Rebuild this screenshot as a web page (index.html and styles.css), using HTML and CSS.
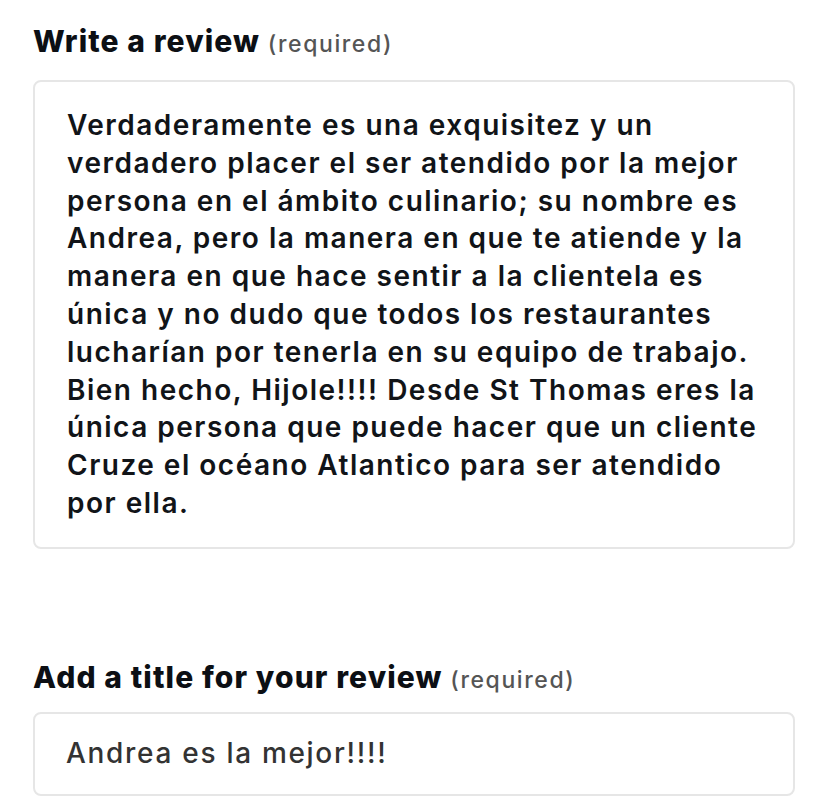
FILE: index.html
```html
<!DOCTYPE html>
<html lang="en">
<head>
  <meta charset="UTF-8">
  <meta name="viewport" content="width=device-width, initial-scale=1.0">
  <title>Write a review</title>
  <link rel="stylesheet" href="styles.css">
</head>
<body>
  <form class="review-form">
    <!-- Review body -->
    <div class="field">
      <label class="field-label">Write a review <span class="required">(required)</span></label>
      <div class="field-box review-text">
        Verdaderamente es una exquisitez y un<br>
        verdadero placer el ser atendido por la mejor<br>
        persona en el ámbito culinario; su nombre es<br>
        Andrea, pero la manera en que te atiende y la<br>
        manera en que hace sentir a la clientela es<br>
        única y no dudo que todos los restaurantes<br>
        lucharían por tenerla en su equipo de trabajo.<br>
        Bien hecho, Hijole!!!! Desde St Thomas eres la<br>
        única persona que puede hacer que un cliente<br>
        Cruze el océano Atlantico para ser atendido<br>
        por ella.
      </div>
    </div>

    <!-- Review title -->
    <div class="field field-title">
      <label class="field-label">Add a title for your review <span class="required">(required)</span></label>
      <div class="field-box title-text">Andrea es la mejor!!!!</div>
    </div>
  </form>
</body>
</html>
```

FILE: styles.css
```css
/* Global Styles */
body {
  margin: 0;
  background: #fff;
  font-family: Inter, "Noto Sans", sans-serif;
  color: #0f1111;
}

.review-form {
  display: flex;
  flex-direction: column;
  padding: 21px 33px 0 33px;
}

/* Field */
.field {
  display: flex;
  flex-direction: column;
}

.field-label {
  font-size: 30px;
  font-weight: 800;
  line-height: 40px;
  letter-spacing: 1.1px;
  margin-bottom: 16px;
  color: #0c0f14;
}

.field-title {
  margin-top: 108px;
}

.field-title .field-label {
  margin-bottom: 12px;
}

.required {
  font-size: 23px;
  font-weight: 500;
  letter-spacing: 1.6px;
  color: #555;
}

.field-box {
  border: 2px solid #e6e6e6;
  border-radius: 8px;
  background: #fff;
}

.review-text {
  padding: 25px 20px 24px 32px;
  font-size: 28px;
  font-weight: 600;
  line-height: 37.8px;
  letter-spacing: 1.5px;
  color: #111418;
  white-space: nowrap;
}

.title-text {
  padding: 20px 20px 22px 31px;
  font-size: 28px;
  font-weight: 500;
  line-height: 38px;
  letter-spacing: 1.7px;
  color: #333;
}
```
